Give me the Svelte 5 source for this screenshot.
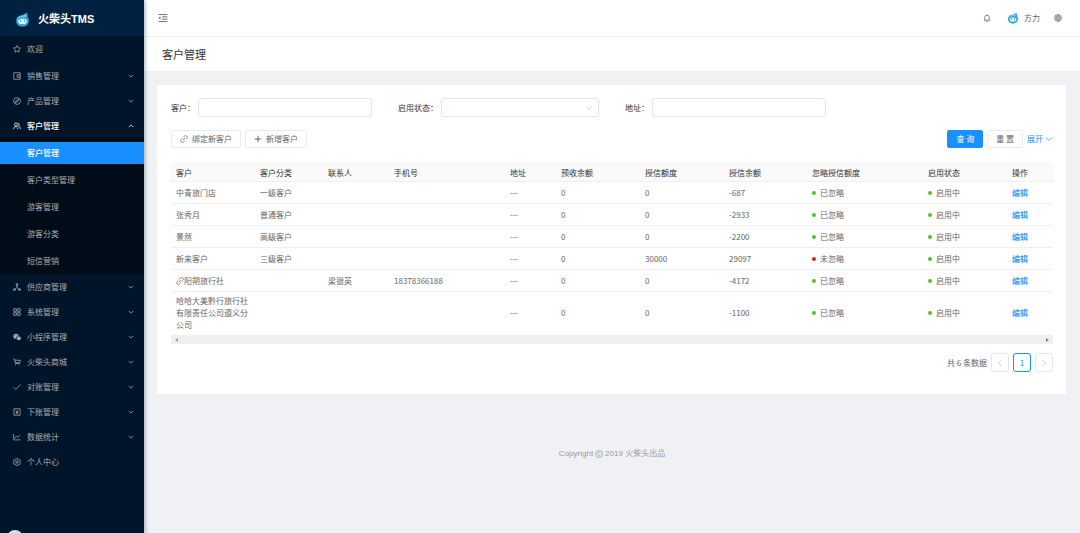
<script lang="ts">
  type MenuItem = {
    label: string;
    icon: string;
    leaf?: boolean;
    children?: string[];
  };

  type Customer = {
    name: string;
    type: string;
    contact?: string;
    phone?: string;
    prepaid: number;
    credit: number;
    balance: number;
    ignored: boolean;
    linked?: boolean;
  };

  const menu: MenuItem[] = [
    { label: '欢迎', icon: 'star', leaf: true },
    { label: '销售管理', icon: 'wallet' },
    { label: '产品管理', icon: 'compass' },
    {
      label: '客户管理',
      icon: 'team',
      children: ['客户管理', '客户类型管理', '游客管理', '游客分类', '短信营销'],
    },
    { label: '供应商管理', icon: 'supplier' },
    { label: '系统管理', icon: 'grid' },
    { label: '小程序管理', icon: 'wechat' },
    { label: '火柴头商城', icon: 'cart' },
    { label: '对账管理', icon: 'check' },
    { label: '下账管理', icon: 'account' },
    { label: '数据统计', icon: 'chart' },
    { label: '个人中心', icon: 'setting', leaf: true },
  ];

  const columns = [
    { title: '客户', width: 84 },
    { title: '客户分类', width: 68 },
    { title: '联系人', width: 66 },
    { title: '手机号', width: 116 },
    { title: '地址', width: 51 },
    { title: '预收余额', width: 84 },
    { title: '授信额度', width: 84 },
    { title: '授信余额', width: 83 },
    { title: '忽略授信额度', width: 116 },
    { title: '启用状态', width: 84 },
    { title: '操作', width: 46 },
  ];

  const totalWidth = columns.reduce((sum, col) => sum + col.width, 0);

  const customers: Customer[] = [
    { name: '中青旅门店', type: '一级客户', prepaid: 0, credit: 0, balance: -687, ignored: true },
    { name: '张秀月', type: '普通客户', prepaid: 0, credit: 0, balance: -2933, ignored: true },
    { name: '景然', type: '高级客户', prepaid: 0, credit: 0, balance: -2200, ignored: true },
    { name: '新来客户', type: '三级客户', prepaid: 0, credit: 30000, balance: 29097, ignored: false },
    { name: '阳朔旅行社', type: '', contact: '梁银英', phone: '18378366188', prepaid: 0, credit: 0, balance: -4172, ignored: true, linked: true },
    { name: '哈哈大美黔行旅行社有限责任公司遵义分公司', type: '', prepaid: 0, credit: 0, balance: -1100, ignored: true },
  ];

  let open = $state('客户管理');
  let active = $state('客户管理');

  function toggle(item: MenuItem) {
    open = open === item.label ? '' : item.label;
  }
</script>

{#snippet icon(name: string)}
  <svg class="icon" viewBox="0 0 16 16" aria-hidden="true">
    {#if name === 'star'}
      <path d="M8 1l2.100 4.500 4.900.6-3.600 3.300.9 4.900L8 12l-4.300 2.300.9-4.900L1 6.100l4.900-.6z" />
    {:else if name === 'wallet'}
      <path d="M1.500 1.500h13v13h-13zM14.500 5.500h-6v5h6M11 8h.8" />
    {:else if name === 'compass'}
      <circle cx="8" cy="8" r="6.800" />
      <path d="M11.500 4.500L9.300 9.300 4.500 11.500l2.200-4.800z" />
    {:else if name === 'team'}
      <circle cx="6" cy="5" r="3" />
      <path d="M1.300 14.500c0-3.500 2-5.500 4.700-5.500 1.500 0 2.700.6 3.500 1.500M9.500 2.300a3 3 0 0 1 1.500 5.600c2.200.8 3.600 3 3.800 6.600M8 14.500l3-3" />
    {:else if name === 'supplier'}
      <path d="M8 5v4M8 9l-5 3.500M8 9l5 3.500M6.500 1.500h3V5h-3zM1 12h3.500v2.500H1zM11.500 12H15v2.500h-3.500z" />
    {:else if name === 'grid'}
      <path d="M1.500 1.500h5.200v5.200H1.500zM9.300 1.500h5.200v5.200H9.300zM1.500 9.300h5.200v5.200H1.500zM9.300 9.300h5.200v5.200H9.300z" />
    {:else if name === 'wechat'}
      <path class="solid" fill-rule="evenodd" d="M6 1.500c3 0 5.300 1.700 5.700 4.100-3.300 0-5.700 2-5.700 4.700l.1.800-2-.2L2 12l.5-2C1 9 .3 7.800.3 6.300.3 3.600 2.900 1.500 6 1.500zM4 4.200a.8.8 0 1 0 0 1.600.8.8 0 0 0 0-1.600zm4 0a.8.8 0 1 0 0 1.600.8.8 0 0 0 0-1.600z" />
      <path class="solid" fill-rule="evenodd" d="M11.400 6.600c2.600 0 4.500 1.700 4.500 3.800 0 1.200-.6 2.200-1.600 2.900l.4 1.500-1.700-.8c-3.300.8-6-1-6-3.600 0-2.100 1.900-3.800 4.400-3.800zM10 8.600a.6.600 0 1 0 0 1.300.6.600 0 0 0 0-1.300zm3 0a.6.600 0 1 0 0 1.300.6.600 0 0 0 0-1.300z" />
    {:else if name === 'cart'}
      <path d="M.8 2h2.400l1.600 9h8.600M3.800 4.500h11l-1.300 5H4.500M4.500 13.800h1.500M11.500 13.800h1.500" />
    {:else if name === 'check'}
      <path d="M1 8.500L5.500 13 15 3" />
    {:else if name === 'account'}
      <path d="M1.800 1.500h12.400v13H1.800zM5.300 4.500L8 7.800l2.700-3.300M8 7.800v4.200M5.500 8h5M5.500 10.200h5" />
    {:else if name === 'chart'}
      <path d="M1.200 2v11.800h14M3.500 10.500l3.200-4 3 2.500 4.500-5" />
    {:else if name === 'setting'}
      <path d="M6.500 1h3l.6 2 1.700 1 2.100-.5 1.400 2.500L13.900 7.500v1.200l1.400 1.500-1.400 2.500-2.100-.5-1.700 1-.6 2h-3l-.6-2-1.700-1-2.100.5L.7 10.200l1.400-1.500V7.500L.7 6l1.400-2.500 2.100.5 1.700-1z" />
      <circle cx="8" cy="8" r="2.400" />
    {:else if name === 'down'}
      <path d="M2 5l6 6 6-6" />
    {:else if name === 'up'}
      <path d="M2 11l6-6 6 6" />
    {:else if name === 'left'}
      <path d="M11 2L5 8l6 6" />
    {:else if name === 'right'}
      <path d="M5 2l6 6-6 6" />
    {:else if name === 'plus'}
      <path stroke-width="2" d="M8 1.500v13M1.500 8h13" />
    {:else if name === 'link'}
      <path d="M6.500 4.500l2.300-2.300a3.400 3.400 0 0 1 4.900 4.900l-2.300 2.300M9.500 11.500l-2.300 2.300a3.400 3.400 0 0 1-4.900-4.900l2.300-2.300M6 10l4-4" />
    {:else if name === 'fold'}
      <path d="M1 2.500h14M6.500 6.200H15M6.500 9.800H15M1 13.500h14" />
      <path class="solid" d="M4 5.300v5.400L1 8z" />
    {:else if name === 'bell'}
      <path d="M8 .8v1.400M1.500 12.500h13M3.500 12.500V7a4.500 4.500 0 0 1 9 0v5.500M6.300 14.800h3.400" />
    {:else if name === 'globe'}
      <circle cx="8" cy="8" r="6.800" />
      <path stroke-width="1" d="M1.500 8h13M8 1.200v13.600M2.500 4.500c3 1.500 8 1.500 11 0M2.500 11.500c3-1.500 8-1.500 11 0M8 1.200c-4 3.500-4 10 0 13.600M8 1.200c4 3.500 4 10 0 13.600" />
    {:else if name === 'copyright'}
      <circle cx="8" cy="8" r="7" />
      <path d="M10.800 6C9.500 3.800 5.200 4.200 5.200 8s4.300 4.200 5.600 2" />
    {/if}
  </svg>
{/snippet}

{#snippet mascot()}
  <svg class="mascot" viewBox="0 0 32 32" aria-hidden="true">
    <path fill="#2fa9e0" d="M24 1c3 3 4 6.500 2.500 9.500C29 13 30 16 29.500 20 28.500 27 23 31 16 31S3 27 2.500 20C2 13 6 8.500 13 7 18 6 22 4 24 1z" />
    <path fill="#6fd0f5" d="M23.500 4c1 3-.5 5.500-3.500 7-6-1-11 1-15 6 1-5 4-7.500 9-8.500 4-.8 7.500-2 9.500-4.500z" />
    <ellipse cx="16" cy="20" rx="9" ry="5.500" fill="#e9f8ff" />
    <path stroke="#1787c4" stroke-width="2" stroke-linecap="round" d="M12 18v2M20 18v2" />
  </svg>
{/snippet}

<div class="layout">
  <aside>
    <a class="logo" href="#home">
      {@render mascot()}
      <span>火柴头TMS</span>
    </a>
    <nav>
      {#each menu as item}
        {#if item.leaf}
          <a class="item leaf" href="#{item.icon}">
            {@render icon(item.icon)}
            <span>{item.label}</span>
          </a>
        {:else}
          <button
            class="item"
            class:current={item.children}
            aria-expanded={open === item.label}
            onclick={() => toggle(item)}
          >
            {@render icon(item.icon)}
            <span>{item.label}</span>
            <span class="arrow">{@render icon(open === item.label ? 'up' : 'down')}</span>
          </button>
        {/if}
        {#if item.children && open === item.label}
          <div class="submenu">
            {#each item.children as child}
              <a
                href="#{child}"
                class:active={active === child}
                onclick={() => (active = child)}>{child}</a
              >
            {/each}
          </div>
        {/if}
      {/each}
    </nav>
    <span class="bubble"></span>
  </aside>

  <div class="page">
    <header>
      <button class="plain fold" aria-label="收起菜单">{@render icon('fold')}</button>
      <div class="tools">
        <button class="plain" aria-label="通知">{@render icon('bell')}</button>
        <a class="user" href="#user">
          {@render mascot()}
          <span>方力</span>
        </a>
        <button class="plain" aria-label="语言">{@render icon('globe')}</button>
      </div>
    </header>

    <h1>客户管理</h1>

    <main>
      <section class="card">
        <form onsubmit={(e) => e.preventDefault()}>
          <div class="fields">
            <div class="field">
              <label for="customer">客户：</label>
              <input id="customer" type="text" />
            </div>
            <div class="field">
              <label for="status">启用状态：</label>
              <div class="select">
                <select id="status">
                  <option value=""></option>
                  <option value="1">启用中</option>
                </select>
                {@render icon('down')}
              </div>
            </div>
            <div class="field">
              <label for="address">地址：</label>
              <input id="address" type="text" />
            </div>
          </div>
          <div class="actions">
            <button type="button" class="btn">{@render icon('link')}绑定新客户</button>
            <button type="button" class="btn">{@render icon('plus')}新增客户</button>
            <div class="search">
              <button type="submit" class="btn primary">查 询</button>
              <button type="reset" class="btn">重 置</button>
              <a href="#more">展开{@render icon('down')}</a>
            </div>
          </div>
        </form>

        <table>
          <colgroup>
            {#each columns as col}
              <col style="width: {(col.width / totalWidth) * 100}%" />
            {/each}
          </colgroup>
          <thead>
            <tr>
              {#each columns as col}
                <th>{col.title}</th>
              {/each}
            </tr>
          </thead>
          <tbody>
            {#each customers as row}
              <tr>
                <td>{#if row.linked}{@render icon('link')}{/if}{row.name}</td>
                <td>{row.type}</td>
                <td>{row.contact ?? ''}</td>
                <td>{row.phone ?? ''}</td>
                <td>---</td>
                <td>{row.prepaid}</td>
                <td>{row.credit}</td>
                <td>{row.balance}</td>
                <td>
                  <span class="dot" class:red={!row.ignored}></span>{row.ignored ? '已忽略' : '未忽略'}
                </td>
                <td><span class="dot"></span>启用中</td>
                <td><a href="#edit">编辑</a></td>
              </tr>
            {/each}
          </tbody>
        </table>
        <div class="scrollbar">
          <span class="tri"></span>
          <span class="tri next"></span>
        </div>

        <div class="pagination">
          <span>共 {customers.length} 条数据</span>
          <button disabled aria-label="上一页">{@render icon('left')}</button>
          <button class="on">1</button>
          <button disabled aria-label="下一页">{@render icon('right')}</button>
        </div>
      </section>
    </main>

    <footer>Copyright {@render icon('copyright')} 2019 火柴头出品</footer>
  </div>
</div>

<style>
  :global(body) {
    margin: 0;
    background: #f0f1f5;
  }

  .layout {
    display: flex;
    min-height: 100vh;
    font: 8px/12px "Noto Sans CJK SC", sans-serif;
    color: #666;
  }

  .layout :is(button, input, select) {
    box-sizing: border-box;
    font: inherit;
    color: inherit;
    margin: 0;
  }

  a {
    color: #1890ff;
    text-decoration: none;
  }

  .icon {
    width: 8px;
    height: 8px;
    flex: none;
    fill: none;
    stroke: currentColor;
    stroke-width: 1.5;
  }

  .icon .solid {
    fill: currentColor;
    stroke: none;
  }

  .mascot {
    width: 15px;
    height: 15px;
    flex: none;
  }

  aside {
    position: relative;
    z-index: 1;
    width: 144px;
    flex: none;
    background: #001529;
    box-shadow: 1px 0 4px rgba(0, 21, 41, 0.35);
    clip-path: inset(0 -6px 0 0);
  }

  .logo {
    display: flex;
    align-items: center;
    gap: 8px;
    height: 36px;
    padding: 2px 15px 0;
    box-sizing: border-box;
    background: #002140;
    color: #fff;
    font: bold 11px/16px "Liberation Sans", "Noto Sans CJK SC", sans-serif;
  }

  nav {
    padding-top: 2px;
  }

  .item {
    display: flex;
    align-items: center;
    gap: 6px;
    width: 100%;
    height: 22px;
    padding: 0 10px 0 13px;
    margin-bottom: 3px !important;
    border: 0;
    box-sizing: border-box;
    background: none;
    color: #a6adb4 !important;
    cursor: pointer;
  }

  .leaf:first-child {
    margin-bottom: 5px !important;
  }

  .item.current {
    margin-bottom: 0 !important;
    color: #fff !important;
    font-weight: 500 !important;
  }

  .arrow {
    display: flex;
    margin-left: auto;
  }

  .arrow .icon {
    width: 6px;
    height: 6px;
    stroke-width: 2;
  }

  .submenu {
    padding: 5px 0 2px;
    margin-bottom: 2px;
    background: #000c17;
  }

  .submenu a {
    display: block;
    padding-left: 27px;
    margin-bottom: 5px;
    line-height: 22px;
    color: #a6adb4;
  }

  .submenu a:last-child {
    margin-bottom: 0;
  }

  .submenu a.active {
    background: #1890ff;
    color: #fff;
    font-weight: 500;
  }

  .bubble {
    position: absolute;
    left: 7px;
    bottom: -13px;
    width: 16px;
    height: 16px;
    border-radius: 50%;
    background: #d3e4f5;
  }

  .page {
    flex: 1;
    min-width: 0;
  }

  header {
    display: flex;
    align-items: center;
    justify-content: space-between;
    height: 36px;
    padding: 0 18px 0 14px;
    border-bottom: 1px solid #f0f0f0;
    background: #fff;
  }

  .plain {
    display: flex;
    padding: 0;
    border: 0;
    background: none;
    cursor: pointer;
  }

  .fold .icon {
    width: 10px;
    height: 10px;
  }

  .tools {
    display: flex;
    align-items: center;
    gap: 14px;
  }

  .tools .plain:first-child {
    margin-right: 2px;
  }

  .user {
    display: flex;
    align-items: center;
    gap: 5px;
    color: #666;
  }

  .user .mascot {
    width: 12px;
    height: 12px;
  }

  h1 {
    margin: 0;
    padding: 0 18px;
    background: #fff;
    color: #333;
    font-size: 11px;
    font-weight: 400;
    line-height: 34px;
  }

  main {
    padding: 14px 14px 0 13px;
  }

  .card {
    padding: 13px 13px 22px 14px;
    background: #fff;
  }

  .fields {
    display: grid;
    grid-template-columns: repeat(4, 1fr);
    column-gap: 26px;
    color: #333;
  }

  .field {
    display: flex;
    align-items: center;
    gap: 3px;
  }

  .field label {
    white-space: nowrap;
  }

  .field input,
  .field select {
    width: 100%;
    min-width: 0;
    height: 19px;
    padding: 0 6px;
    border: 1px solid #e6e6e6;
    border-radius: 3px;
    background: #fff;
    appearance: none;
  }

  .select {
    position: relative;
    display: flex;
    flex: 1;
  }

  .select .icon {
    position: absolute;
    top: 6px;
    right: 6px;
    color: #bfbfbf;
    pointer-events: none;
  }

  .actions {
    display: flex;
    gap: 4px;
    margin: 13px 0 14px;
  }

  .btn {
    display: flex;
    align-items: center;
    gap: 4px;
    height: 18px;
    padding: 0 8px;
    border: 1px solid #ebebeb;
    border-radius: 2px;
    background: #fff;
    white-space: pre;
    cursor: pointer;
  }

  .actions .primary {
    border-color: #1890ff;
    background: #1890ff;
    color: #fff;
  }

  .search {
    display: flex;
    align-items: center;
    gap: 4px;
    margin-left: auto;
  }

  .search a {
    display: flex;
    align-items: center;
    gap: 2px;
  }

  table {
    width: 100%;
    table-layout: fixed;
    border-collapse: separate;
    border-spacing: 0;
  }

  th,
  td {
    box-sizing: border-box;
    height: 22px;
    padding: 4px 5px;
    border-bottom: 1px solid #f0f0f0;
    text-align: left;
  }

  th {
    height: 20px;
    padding: 2px 5px 0;
    background: #fafafa;
    color: #333;
    font-weight: 400;
    white-space: nowrap;
  }

  tr:last-child td {
    padding-top: 3px;
    border-bottom: 0;
  }

  td .icon {
    vertical-align: -1px;
  }

  td a {
    font-weight: 500;
  }

  .dot {
    display: inline-block;
    width: 4px;
    height: 4px;
    margin-right: 4px;
    border-radius: 50%;
    background: #52c41a;
    vertical-align: 1px;
  }

  .dot.red {
    background: #e02020;
  }

  .scrollbar {
    display: flex;
    align-items: center;
    justify-content: space-between;
    height: 9px;
    padding: 0 4px;
    background: #f0f0f1;
  }

  .tri {
    border: 2px solid transparent;
    border-left-width: 0;
    border-right: 3px solid #a0a0a0;
  }

  .tri.next {
    border-right-width: 0;
    border-left: 3px solid #808080;
  }

  .pagination {
    display: flex;
    align-items: center;
    justify-content: flex-end;
    gap: 4px;
    margin-top: 9px;
  }

  .pagination button {
    display: flex;
    align-items: center;
    justify-content: center;
    width: 18px;
    height: 19px;
    padding: 0;
    border: 1px solid #e6e6e6;
    border-radius: 3px;
    background: #fff;
  }

  .pagination button:disabled {
    color: #c4c4c4;
  }

  .pagination button.on {
    border-color: #1890ff;
    color: #1890ff;
  }

  footer {
    display: flex;
    align-items: center;
    justify-content: center;
    gap: 2px;
    padding: 54px 0 24px;
    color: #999;
    font-family: "Liberation Sans", "Noto Sans CJK SC", sans-serif;
  }
</style>
